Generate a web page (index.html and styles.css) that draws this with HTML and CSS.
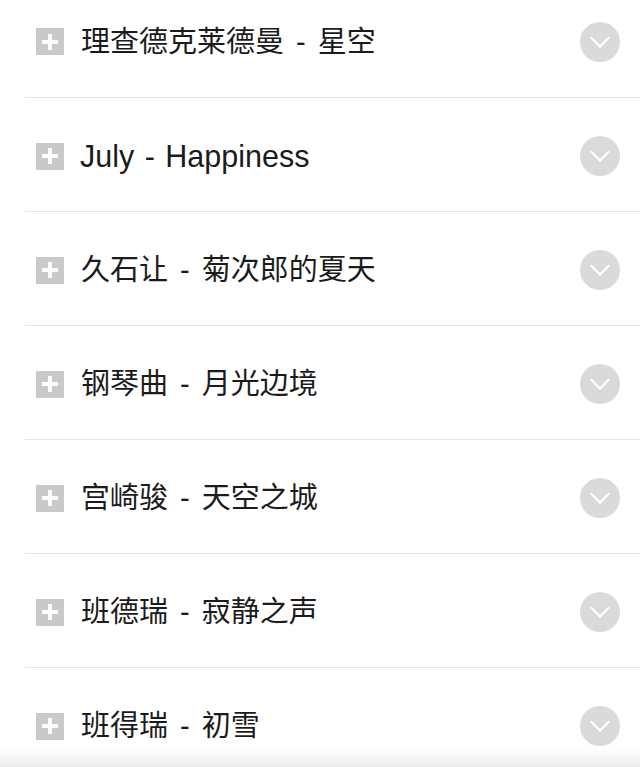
FILE: index.html
```html
<!DOCTYPE html>
<html>
<head>
<meta charset="utf-8">
<link rel="stylesheet" href="styles.css">
</head>
<body>
<ul class="list">
  <li class="row first"><span class="add"></span><span class="title">理查德克莱德曼 - 星空</span><span class="more"></span></li>
  <li class="row"><span class="add"></span><span class="title latin">July - Happiness</span><span class="more"></span></li>
  <li class="row"><span class="add"></span><span class="title">久石让 - 菊次郎的夏天</span><span class="more"></span></li>
  <li class="row"><span class="add"></span><span class="title">钢琴曲 - 月光边境</span><span class="more"></span></li>
  <li class="row"><span class="add"></span><span class="title">宫崎骏 - 天空之城</span><span class="more"></span></li>
  <li class="row"><span class="add"></span><span class="title">班德瑞 - 寂静之声</span><span class="more"></span></li>
  <li class="row"><span class="add"></span><span class="title">班得瑞 - 初雪</span><span class="more"></span></li>
</ul>
<div class="shade"></div>
</body>
</html>
```
FILE: styles.css
```css
html, body {
  margin: 0;
  padding: 0;
  background: #fff;
  height: 767px;
  overflow: hidden;
}
body {
  font-family: "Liberation Sans", "Noto Sans CJK SC", sans-serif;
  position: relative;
}
.list {
  list-style: none;
  margin: 0;
  padding: 0 0 0 25px;
}
.row {
  height: 110px;
  padding-top: 3px;
  border-bottom: 1px solid #e3e3e3;
  display: flex;
  align-items: center;
  padding-right: 20px;
}
.row.first {
  height: 97px;
  padding-top: 0;
  align-items: flex-start;
}
.row.first .add { margin-top: 28px; }
.row.first .title { margin-top: 24px; }
.row.first .more { margin-top: 22px; }
.add {
  width: 28px;
  height: 27px;
  margin-left: 11px;
  background: #c9c9c9;
  position: relative;
  flex: none;
}
.add::before, .add::after {
  content: "";
  position: absolute;
  background: #fff;
  left: 50%;
  top: 50%;
  transform: translate(-50%, -50%);
}
.add::before { width: 16px; height: 4px; }
.add::after { width: 4px; height: 16px; }
.title {
  margin-left: 17px;
  font-size: 29px;
  word-spacing: 4px;
  color: #1b1b1b;
  flex: 1;
  white-space: nowrap;
  line-height: 36px;
}
.title.latin {
  font-size: 30.5px;
  word-spacing: 2px;
  margin-left: 16px;
}
.more {
  width: 40px;
  height: 40px;
  border-radius: 50%;
  background: #dadada;
  flex: none;
  position: relative;
}
.more::after {
  content: "";
  position: absolute;
  width: 12px;
  height: 12px;
  border-right: 2px solid #fff;
  border-bottom: 2px solid #fff;
  left: 13px;
  top: 9px;
  transform: rotate(45deg);
}
.shade {
  position: absolute;
  left: 0;
  right: 0;
  bottom: 0;
  height: 18px;
  background: linear-gradient(to bottom, rgba(235,235,235,0), #ebebeb);
}
```
